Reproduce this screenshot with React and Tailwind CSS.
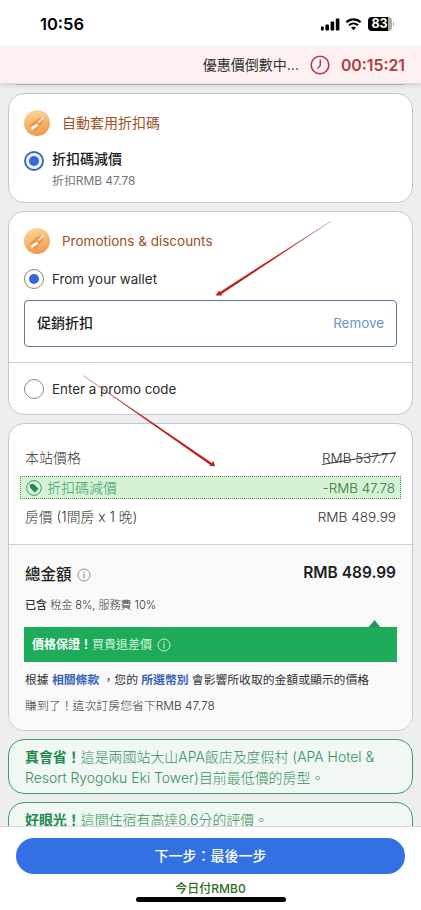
import clsx from 'clsx';

const StatusBar = () => (
  <div className="flex h-[46px] items-center justify-between bg-white pl-[40px] pr-[27px] pt-[2px]">
    <span className="text-[16.5px] font-semibold leading-none text-black">10:56</span>
    <div className="flex items-center">
      <svg width="20" height="13" viewBox="0 0 20 13" fill="#000">
        <rect x="-0.8" y="8.5" width="3.6" height="4" rx="0.9" />
        <rect x="4.4" y="6.5" width="3.6" height="6" rx="0.9" />
        <rect x="9.6" y="3.5" width="3.6" height="9" rx="0.9" />
        <rect x="14.8" y="0.5" width="3.6" height="12" rx="0.9" />
      </svg>
      <svg className="ml-[4px]" width="17" height="13" viewBox="0 0 16 13" fill="none" stroke="#000">
        <path d="M0.9 4.3C4.9 0.4 11.1 0.4 15.1 4.3" strokeWidth="2.2" />
        <path d="M3.6 7.2C6.1 4.9 9.9 4.9 12.4 7.2" strokeWidth="2.2" />
        <path d="M8 12.2L5.5 9.6C6.9 8.4 9.1 8.4 10.5 9.6Z" fill="#000" stroke="none" />
      </svg>
      <div className="ml-[6px] flex h-[14px] w-[24px] items-center justify-center rounded-[4px] bg-[linear-gradient(90deg,#000_83%,#aaa_83%)] text-[12.5px] font-bold leading-none text-white">
        83
      </div>
      <span className="ml-px h-[4px] w-[1.5px] rounded-r bg-[#aaa]" />
    </div>
  </div>
);

const PromoIcon = () => (
  <svg width="26" height="26" viewBox="0 0 26 26" className="shrink-0">
    <defs>
      <linearGradient id="promoBg" x1="0.4" y1="0" x2="0.6" y2="1">
        <stop offset="0" stopColor="#fbd596" />
        <stop offset="1" stopColor="#f0984a" />
      </linearGradient>
    </defs>
    <circle cx="13" cy="13" r="13" fill="url(#promoBg)" />
    <path d="M5.5 15.5L14 8.5L19.5 7L18.5 12.5L11 21.5Z" fill="#e98a3a" opacity="0.75" />
    <path d="M7.2 18.8L13.6 14.6" stroke="#fff" strokeWidth="2.8" />
    <path d="M14.2 12.6L19.4 7.4" stroke="#fdeed8" strokeWidth="1.6" />
  </svg>
);

const Radio = ({ checked, strong }) => (
  <span
    className={clsx(
      'flex size-[20px] shrink-0 items-center justify-center rounded-full',
      strong ? 'border-2 border-[#4468b8] bg-[#eaf5ff]' : 'border border-[#85868c] bg-white'
    )}
  >
    {checked && <span className="size-[10px] rounded-full bg-[#3568dc]" />}
  </span>
);

const InfoIcon = ({ className }) => (
  <svg width="14" height="14" viewBox="0 0 14 14" fill="none" stroke="currentColor" className={className}>
    <circle cx="7" cy="7" r="6" strokeWidth="0.9" />
    <path d="M7 5.5V10.5" strokeWidth="1" />
    <path d="M7 3.5V4.7" strokeWidth="1" />
  </svg>
);

const Card = ({ className, children }) => (
  <section className={clsx('shrink-0 overflow-hidden rounded-[16px] border border-[#c3c6d6] bg-white', className)}>
    {children}
  </section>
);

const ApplyCodeCard = () => (
  <Card className="h-[110px] px-[15px] pt-[16px]">
    <div className="flex h-[26px] items-center gap-[12px] text-[14px] text-[#9c5127]">
      <PromoIcon />
      <span className="-mt-[2px]">自動套用折扣碼</span>
    </div>
    <div className="mt-[14px] flex h-[22px] items-center gap-[8px] text-[14px] font-medium text-[#1c1c1c]">
      <Radio checked strong />
      <span className="-mt-[5px]">折扣碼減價</span>
    </div>
    <div className="ml-[28px] text-[11.9px] leading-[18px] text-[#74757c]">折扣RMB 47.78</div>
  </Card>
);

const PromotionsCard = () => (
  <Card className="h-[204px]">
    <div className="px-[15px] pt-[16px]">
      <div className="flex h-[26px] items-center gap-[12px] text-[13.5px] text-[#9c5127]">
        <PromoIcon />
        Promotions &amp; discounts
      </div>
      <div className="mt-[14px] flex h-[22px] items-center gap-[8px] text-[13.4px] text-[#2b2b2b]">
        <Radio checked />
        From your wallet
      </div>
      <div className="mt-[10px] flex h-[47px] items-center justify-between rounded-[4px] border border-[#5c74a4] px-[12px]">
        <span className="-mt-[2px] text-[14px] font-medium text-[#1c1c1c]">促銷折扣</span>
        <span className="-mt-px text-[13.4px] text-[#6c94c8]">Remove</span>
      </div>
    </div>
    <div className="mt-[15px] flex h-[53px] items-center gap-[8px] border-t border-[#cdd0d8] px-[15px] text-[13.4px] text-[#2b2b2b]">
      <Radio />
      Enter a promo code
    </div>
  </Card>
);

const PriceCard = () => (
  <Card className="h-[308px]">
    <div className="h-[120px] pt-[22px] text-[14px] font-light text-[#333]">
      <div className="flex h-[22px] items-center justify-between px-[16px]">
        <span>本站價格</span>
        <span className="relative mt-[2px] text-[13.45px]">
          RMB 537.77
          <svg className="absolute left-0 top-[2px] h-[16px] w-full" viewBox="0 0 74 16" preserveAspectRatio="none">
            <path d="M0 14.5L74 2.5" stroke="#333" strokeWidth="1.1" />
          </svg>
        </span>
      </div>
      <div className="mx-[11px] mt-[8px] flex h-[23px] items-center justify-between border border-dotted border-[#4c8a55] bg-[#d7f1d6] px-[5px]">
        <span className="flex items-center gap-[5px] text-[#2fa565]">
          <svg width="16" height="16" viewBox="0 0 16 16">
            <circle cx="8" cy="8" r="7.4" fill="none" stroke="#2d9254" strokeWidth="0.9" />
            <path d="M3.8 4.2L7.8 4L12.4 8.7L8.8 12.4L4 7.8Z" fill="#21894b" />
          </svg>
          <span className="-mt-px">折扣碼減價</span>
        </span>
        <span className="mt-px text-[13.4px] text-[#2f7d32]">-RMB 47.78</span>
      </div>
      <div className="mt-[7px] flex h-[22px] items-center justify-between px-[16px]">
        <span className="text-[13.8px]">房價 (1間房 x 1 晚)</span>
        <span className="text-[13.6px]">RMB 489.99</span>
      </div>
    </div>
    <div className="h-[187px] border-t border-[#cdd0d8] bg-[#f9f9f9] px-[15px] pt-[17px] text-[#333]">
      <div className="flex h-[24px] items-center justify-between text-[15.5px] text-[#1f1f1f]">
        <span className="flex items-center gap-[5px] pl-px pt-[2px] font-medium">
          總金額
          <InfoIcon className="text-[#7088a0]" />
        </span>
        <span className="-mt-[3px] pr-px font-semibold">RMB 489.99</span>
      </div>
      <div className="mt-[9px] pl-px text-[11.1px] font-light leading-[20px] tracking-[-0.06px]">
        <b className="font-medium">已含</b> 稅金 8%, 服務費 10%
      </div>
      <div className="relative mt-[12px] flex h-[35px] items-center bg-[#1eac5a] px-[8px] text-[12px] text-[#d8f7df]">
        <b className="font-bold text-white">價格保證！</b>買貴退差價
        <InfoIcon className="ml-[5px]" />
        <svg className="absolute -top-[7px] right-[16px]" width="13" height="8" viewBox="0 0 13 8">
          <path d="M6.5 0L13 8H0Z" fill="#219a55" />
        </svg>
      </div>
      <p className="mt-[8px] whitespace-nowrap pl-px text-[11.85px] leading-[20px] tracking-[-0.03px]">
        根據 <b className="font-bold text-[#3564bb]">相關條款</b> ，您的 <b className="font-bold text-[#3564bb]">所選幣別</b> 會影響所收取的金額或顯示的價格
      </p>
      <p className="mt-[7px] pl-px text-[11.9px] font-light leading-[18px]">賺到了！這次訂房您省下RMB 47.78</p>
    </div>
  </Card>
);

const Tip = ({ title, className, children }) => (
  <div
    className={clsx(
      'shrink-0 whitespace-nowrap rounded-[16px] border border-[#3f9c6b] bg-[#f1f7f2] px-[16px] text-[13.95px] font-light leading-[21px] text-[#33925f]',
      className
    )}
  >
    <b className="font-bold text-[#1f8a4f]">{title}</b>
    {children}
  </div>
);

// Hand-drawn style pointers laid over the cards
const Pointers = () => (
  <svg className="pointer-events-none absolute left-0 top-0 z-20" width="421" height="910" viewBox="0 0 421 910">
    <defs>
      <linearGradient id="tailA" gradientUnits="userSpaceOnUse" x1="330" y1="221" x2="270" y2="260">
        <stop offset="0" stopColor="#a36a68" stopOpacity="0.7" />
        <stop offset="1" stopColor="#bd241f" />
      </linearGradient>
      <linearGradient id="tailB" gradientUnits="userSpaceOnUse" x1="83" y1="375" x2="150" y2="420">
        <stop offset="0" stopColor="#b3706a" stopOpacity="0.8" />
        <stop offset="1" stopColor="#bd241f" />
      </linearGradient>
    </defs>
    <path d="M330.3 221.2L219.5 292.2L220.8 294.4L330.6 221.8Z" fill="url(#tailA)" />
    <path d="M215.5 295.5L219 290.5L222.2 295.4Z" fill="#bd241f" />
    <path d="M83.3 375.2L212.3 463.2L211 465.4L83 375.8Z" fill="url(#tailB)" />
    <path d="M215 466.3L213.5 460.8L209.5 466Z" fill="#bd241f" />
  </svg>
);

export default function App() {
  return (
    <div className="relative flex h-[910px] w-[421px] flex-col overflow-hidden bg-[#eeeeef] font-['Inter','Noto_Sans_CJK_TC',sans-serif]">
      <StatusBar />
      <div className="z-10 flex h-[37px] shrink-0 items-center justify-end bg-[#fdf0f0] pr-[16px] shadow-[0_2px_5px_rgba(0,0,0,0.14)]">
        <span className="text-[14px] text-[#333]">優惠價倒數中...</span>
        <svg className="ml-[11px]" width="20" height="20" viewBox="0 0 20 20" fill="none" stroke="#b13a43" strokeWidth="1.6">
          <circle cx="10" cy="10" r="8.8" />
          <path d="M10.3 4.5V10.5L7.5 13.5" strokeWidth="1.4" />
        </svg>
        <span className="ml-[11px] mt-[2px] text-[15.8px] font-semibold text-[#b13a43]">00:15:21</span>
      </div>

      <main className="flex h-[743px] shrink-0 flex-col gap-[8px] overflow-hidden px-[8px]">
        <div className="h-[2px] shrink-0 px-[8px]">
          <div className="h-[2px] border-b border-[#b9bbc4] bg-white" />
        </div>
        <ApplyCodeCard />
        <PromotionsCard />
        <PriceCard />
        <Tip title="真會省！" className="h-[55px] pt-[6px]">
          這是兩國站大山APA飯店及度假村 (APA Hotel &amp;
          <br />
          Resort Ryogoku Eki Tower)目前最低價的房型。
        </Tip>
        <Tip title="好眼光！" className="h-[55px] pt-[6px]">
          這間住宿有高達8.6分的評價。
        </Tip>
      </main>

      <footer className="z-10 flex h-[84px] shrink-0 flex-col items-center border-t border-[#d5d5d8] bg-white px-[16px] pt-[11px]">
        <button className="h-[36px] w-full shrink-0 rounded-full bg-[#3370e3] pb-px text-[14px] font-medium text-white">下一步：最後一步</button>
        <span className="mt-[6px] text-[12px] font-medium leading-[18px] text-[#2c6e25]">今日付RMB0</span>
        <span className="-mt-px h-[5px] w-[150px] shrink-0 rounded-full bg-black" />
      </footer>
      <Pointers />
    </div>
  );
}
